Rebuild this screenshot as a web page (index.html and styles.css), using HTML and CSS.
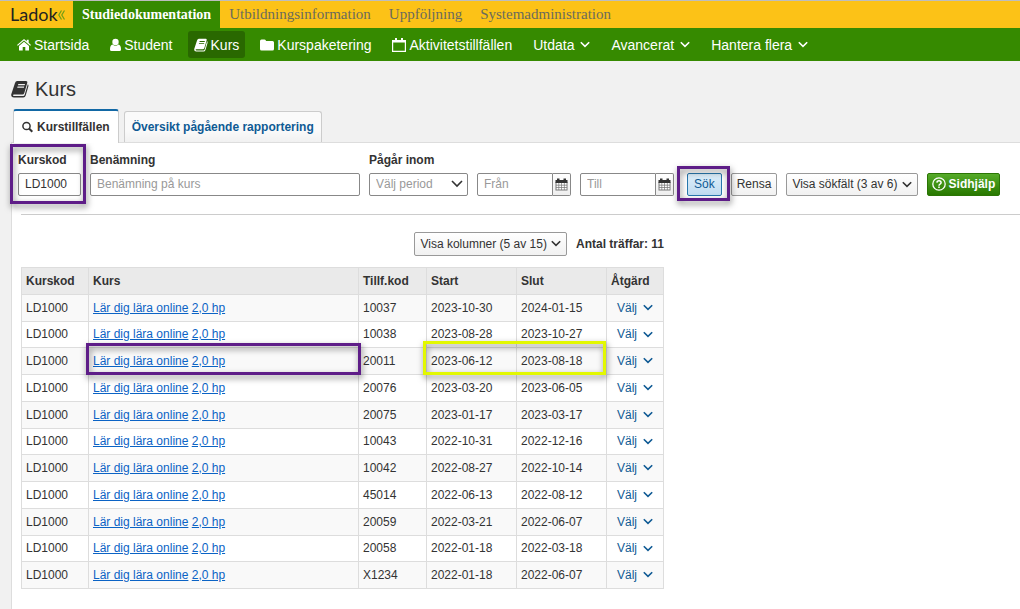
FILE: index.html
```html
<!DOCTYPE html>
<html lang="sv">
<head>
<meta charset="utf-8">
<meta name="viewport" content="width=device-width, initial-scale=1">
<title>Ladok – Kurs</title>
<link rel="stylesheet" href="styles.css">
</head>
<body>
<svg class="sprite" aria-hidden="true">
  <symbol id="chevron" viewBox="0 0 10 7"><path d="M.8 1.200 5 5.300 9.200 1.200" fill="none" stroke="currentColor" stroke-width="1.600"/></symbol>
  <symbol id="book" viewBox="0 0 18 18"><path fill="currentColor" fill-rule="evenodd" d="M6.2 1H15q1.800 0 1.300 1.800L13.300 13q-.5 1.500-2 1.500H2.900q-1 0-.8.9.2.6 1.200.6h9q1 0 1.300-1L16.800 4.300q1 .6.600 2L14.700 15.500Q14.200 17.500 12.200 17.500H3Q0 17.500.2 14.500L4 3Q4.600 1 6.200 1ZM7.300 4 7 5.200h6.700L14 4ZM6.500 6.600 6.200 7.800h6.700l.3-1.200Z"/></symbol>
  <symbol id="calendar" viewBox="0 0 13 13"><path fill="#777" d="M.5 4h12v8.500H.5Z"/><path fill="currentColor" d="M.5 2H2V.5h2.500V2h4V.5H11V2h1.500v3H.5Z"/><path fill="#fff" d="M1.500 5h2v1.700h-2zM4.200 5h2v1.700h-2zM6.900 5h2v1.700h-2zM9.600 5h2v1.700h-2zM1.500 7.400h2v1.700h-2zM4.200 7.400h2v1.700h-2zM6.900 7.400h2v1.700h-2zM9.600 7.400h2v1.700h-2zM1.500 9.800h2v1.700h-2zM4.200 9.800h2v1.700h-2zM6.900 9.800h2v1.700h-2zM9.600 9.800h2v1.700h-2z"/></symbol>
</svg>

<header>
  <nav class="topbar" aria-label="Moduler">
    <a class="logo" href="#"><span>Ladok</span><svg viewBox="0 0 7 12"><path d="M3.500 1.500.8 6l2.700 4.500M6.500 1.500 3.800 6l2.700 4.500" fill="none" stroke="#6f9d16" stroke-width="1.200"/></svg></a>
    <a class="module module-active" href="#">Studiedokumentation</a>
    <a class="module" href="#">Utbildningsinformation</a>
    <a class="module" href="#">Uppföljning</a>
    <a class="module" href="#">Systemadministration</a>
  </nav>
  <nav class="menu" aria-label="Huvudmeny">
    <a class="menu-item" href="#"><svg class="icon-14" viewBox="0 0 14 14"><path fill="currentColor" d="M7 3.800 12 8v4.500H8.300V9H5.700v3.500H2V8ZM7 1l2.800 2.300V1.800h1.900v3L14 6.900l-.8.900L7 2.600.8 7.800 0 6.900Z"/></svg>Startsida</a>
    <a class="menu-item" href="#"><svg class="icon-11" viewBox="0 0 11 14"><circle cx="5.500" cy="4" r="3.200" fill="currentColor"/><path fill="currentColor" d="M2.600 6.500Q5.500 9 8.400 6.500 11 7 11 11.500q0 1.500-1.500 1.500h-8Q0 13 0 11.500 0 7 2.600 6.500Z"/></svg>Student</a>
    <a class="menu-item menu-item-active" href="#"><svg class="icon-14"><use href="#book"/></svg>Kurs</a>
    <a class="menu-item" href="#"><svg class="icon-14" viewBox="0 0 14 14"><path fill="currentColor" d="M0 3Q0 1.500 1.500 1.500h3Q6 1.500 6 3h6.500Q14 3 14 4.500v6.500q0 1.500-1.500 1.500h-11Q0 12.500 0 11Z"/></svg>Kurspaketering</a>
    <a class="menu-item" href="#"><svg class="icon-14" viewBox="0 0 14 14"><path d="M.6 2.500h12.800v10.900H.6Z" fill="none" stroke="currentColor" stroke-width="1.200"/><path d="M.6 2.500h12.800v2H.6ZM3 0h2v4H3zM9 0h2v4H9z" fill="currentColor"/></svg>Aktivitetstillfällen</a>
    <a class="menu-item" href="#">Utdata<svg class="chevron"><use href="#chevron"/></svg></a>
    <a class="menu-item" href="#">Avancerat<svg class="chevron"><use href="#chevron"/></svg></a>
    <a class="menu-item" href="#">Hantera flera<svg class="chevron"><use href="#chevron"/></svg></a>
  </nav>
</header>

<main>
  <h1><svg class="icon-18"><use href="#book"/></svg>Kurs</h1>
  <div class="tabs">
    <a class="tab tab-active" href="#"><svg class="icon-11" viewBox="0 0 11 11"><circle cx="4.500" cy="4.500" r="3.600" fill="none" stroke="currentColor" stroke-width="1.500"/><path d="m7 7 3.300 3.300" stroke="currentColor" stroke-width="2"/></svg>Kurstillfällen</a>
    <a class="tab" href="#">Översikt pågående rapportering</a>
  </div>

  <div class="panel">
    <form class="search">
      <div class="field field-code">
        <label for="code">Kurskod</label>
        <input class="control" id="code" type="text" value="LD1000">
        <span class="mark mark-code"></span>
      </div>
      <div class="field field-name">
        <label for="name">Benämning</label>
        <input class="control" id="name" type="text" placeholder="Benämning på kurs">
      </div>
      <div class="field">
        <label for="period">Pågår inom</label>
        <div class="dates">
          <div class="select"><select class="control" id="period"><option>Välj period</option></select><svg class="select-arrow" viewBox="0 0 12 8"><path d="m1 1 5 5 5-5" fill="none" stroke="currentColor" stroke-width="1.600"/></svg></div>
          <div class="date"><input class="control" type="text" placeholder="Från" aria-label="Från"><button class="date-button" type="button" aria-label="Öppna kalender"><svg class="icon-13"><use href="#calendar"/></svg></button></div>
          <div class="date"><input class="control" type="text" placeholder="Till" aria-label="Till"><button class="date-button" type="button" aria-label="Öppna kalender"><svg class="icon-13"><use href="#calendar"/></svg></button></div>
        </div>
      </div>
      <div class="actions">
        <div class="marked"><button class="button button-search" type="button">Sök</button><span class="mark mark-search"></span></div>
        <button class="button" type="button">Rensa</button>
        <button class="button" type="button">Visa sökfält (3 av 6)<svg class="chevron"><use href="#chevron"/></svg></button>
        <button class="button button-help" type="button"><svg class="icon-14" viewBox="0 0 14 14"><circle cx="7" cy="7" r="6.200" fill="none" stroke="currentColor" stroke-width="1.300"/><path d="M4.900 5.600Q5 3.700 7 3.700T9.100 5.500Q9.100 6.500 8 7.100 7 7.600 7 8.700M7 9.500V11" fill="none" stroke="currentColor" stroke-width="1.500"/></svg>Sidhjälp</button>
      </div>
    </form>
    <hr>

    <section class="results">
      <div class="toolbar">
        <button class="button button-columns" type="button">Visa kolumner (5 av 15)<svg class="chevron"><use href="#chevron"/></svg></button>
        <strong>Antal träffar: 11</strong>
      </div>
      <table>
        <colgroup><col class="col-code"><col class="col-course"><col class="col-instance"><col class="col-date"><col class="col-date"><col class="col-action"></colgroup>
        <thead><tr><th>Kurskod</th><th>Kurs</th><th>Tillf.kod</th><th>Start</th><th>Slut</th><th>Åtgärd</th></tr></thead>
        <tbody>
          <tr><td>LD1000</td><td><a href="#">Lär dig lära online</a> <a href="#">2,0 hp</a></td><td>10037</td><td>2023-10-30</td><td>2024-01-15</td><td><button class="choose" type="button">Välj<svg class="chevron"><use href="#chevron"/></svg></button></td></tr>
          <tr><td>LD1000</td><td><a href="#">Lär dig lära online</a> <a href="#">2,0 hp</a></td><td>10038</td><td>2023-08-28</td><td>2023-10-27</td><td><button class="choose" type="button">Välj<svg class="chevron"><use href="#chevron"/></svg></button></td></tr>
          <tr><td>LD1000</td><td class="marked"><a href="#">Lär dig lära online</a> <a href="#">2,0 hp</a><span class="mark mark-course"></span></td><td>20011</td><td class="marked">2023-06-12<span class="mark mark-period"></span></td><td>2023-08-18</td><td><button class="choose" type="button">Välj<svg class="chevron"><use href="#chevron"/></svg></button></td></tr>
          <tr><td>LD1000</td><td><a href="#">Lär dig lära online</a> <a href="#">2,0 hp</a></td><td>20076</td><td>2023-03-20</td><td>2023-06-05</td><td><button class="choose" type="button">Välj<svg class="chevron"><use href="#chevron"/></svg></button></td></tr>
          <tr><td>LD1000</td><td><a href="#">Lär dig lära online</a> <a href="#">2,0 hp</a></td><td>20075</td><td>2023-01-17</td><td>2023-03-17</td><td><button class="choose" type="button">Välj<svg class="chevron"><use href="#chevron"/></svg></button></td></tr>
          <tr><td>LD1000</td><td><a href="#">Lär dig lära online</a> <a href="#">2,0 hp</a></td><td>10043</td><td>2022-10-31</td><td>2022-12-16</td><td><button class="choose" type="button">Välj<svg class="chevron"><use href="#chevron"/></svg></button></td></tr>
          <tr><td>LD1000</td><td><a href="#">Lär dig lära online</a> <a href="#">2,0 hp</a></td><td>10042</td><td>2022-08-27</td><td>2022-10-14</td><td><button class="choose" type="button">Välj<svg class="chevron"><use href="#chevron"/></svg></button></td></tr>
          <tr><td>LD1000</td><td><a href="#">Lär dig lära online</a> <a href="#">2,0 hp</a></td><td>45014</td><td>2022-06-13</td><td>2022-08-12</td><td><button class="choose" type="button">Välj<svg class="chevron"><use href="#chevron"/></svg></button></td></tr>
          <tr><td>LD1000</td><td><a href="#">Lär dig lära online</a> <a href="#">2,0 hp</a></td><td>20059</td><td>2022-03-21</td><td>2022-06-07</td><td><button class="choose" type="button">Välj<svg class="chevron"><use href="#chevron"/></svg></button></td></tr>
          <tr><td>LD1000</td><td><a href="#">Lär dig lära online</a> <a href="#">2,0 hp</a></td><td>20058</td><td>2022-01-18</td><td>2022-03-18</td><td><button class="choose" type="button">Välj<svg class="chevron"><use href="#chevron"/></svg></button></td></tr>
          <tr><td>LD1000</td><td><a href="#">Lär dig lära online</a> <a href="#">2,0 hp</a></td><td>X1234</td><td>2022-01-18</td><td>2022-06-07</td><td><button class="choose" type="button">Välj<svg class="chevron"><use href="#chevron"/></svg></button></td></tr>
        </tbody>
      </table>
    </section>
  </div>
</main>
</body>
</html>
```

FILE: styles.css
```css
* { box-sizing: border-box; }

body {
  margin: 0;
  min-height: 100vh;
  display: flex;
  flex-direction: column;
  background: #f1f1f1;
  color: #333;
  font: 12px/16px "Liberation Sans", Arial, sans-serif;
}

button, input, select { font: inherit; color: inherit; margin: 0; }
svg { flex: none; }
.sprite { position: absolute; width: 0; height: 0; }
.icon-11 { width: 11px; height: 14px; }
.icon-13 { width: 13px; height: 13px; }
.icon-14 { width: 14px; height: 14px; }
.icon-18 { width: 18px; height: 18px; }
.chevron { width: 10px; height: 7px; }

/* Header */
.topbar {
  display: flex;
  height: 28px;
  border-top: 1px solid #bdbdbd;
  background: #fcc217;
  font: 15px/27px "Liberation Serif", serif;
}
.logo {
  display: flex;
  align-items: center;
  width: 73px;
  padding-left: 10px;
  color: #222;
  font: 400 18px/27px Lato, sans-serif;
  text-decoration: none;
}
.logo svg { width: 7px; height: 12px; }
.module { padding: 0 9px; color: #6b6b5c; text-decoration: none; }
.module-active { padding: 0 9px; background: #368a00; color: #fff; font-size: 14px; font-weight: bold; }

.menu {
  display: flex;
  align-items: center;
  gap: 9px;
  min-height: 33px;
  padding-left: 11px;
  background: #368a00;
  font-size: 14px;
}
.menu-item {
  display: flex;
  align-items: center;
  gap: 3px;
  height: 27px;
  padding: 0 6px;
  border-radius: 3px;
  color: #fff;
  text-decoration: none;
}
.menu-item .chevron { margin-left: 3px; }
.menu-item-active { background: #296800; }

/* Heading and tabs */
main { flex: 1; display: flex; flex-direction: column; }
h1 {
  display: flex;
  align-items: center;
  gap: 6px;
  margin: 16px 0 8px 11px;
  font-size: 20px;
  font-weight: normal;
  line-height: 24px;
}
.tabs { display: flex; align-items: flex-end; gap: 5px; padding-left: 13px; }
.tab {
  display: flex;
  align-items: center;
  gap: 4px;
  height: 31px;
  padding: 0 7px;
  border: 1px solid #ccc;
  border-bottom: 0;
  border-radius: 3px 3px 0 0;
  background: linear-gradient(#fafafa 60%, #f1f1f1);
  color: #0f5a94;
  font-weight: bold;
  text-decoration: none;
}
.tab-active {
  height: 34px;
  padding: 0 8px;
  margin-bottom: -1px;
  border-top: 2px solid #1268a5;
  background: #fff;
  color: #333;
  z-index: 1;
}

/* Search form */
.panel {
  flex: 1;
  margin-left: 11px;
  border: 1px solid #ddd;
  border-width: 1px 0 0 1px;
  background: #fff;
}
.search {
  display: flex;
  flex-wrap: wrap;
  align-items: flex-end;
  gap: 9px;
  padding: 9px 6px 0;
}
.field { display: flex; flex-direction: column; gap: 5px; position: relative; }
.field label { font-weight: bold; }
.field-code { width: 63px; }
.field-name { width: 270px; }
.control {
  width: 100%;
  height: 23px;
  padding: 0 6px 1px;
  border: 1px solid #888;
  border-radius: 2px;
  background: #fff;
}
.control::placeholder { color: #999; opacity: 1; }
.dates, .actions { display: flex; gap: 9px; }
.actions { margin-left: 4px; }
.select { position: relative; width: 99px; }
.select select { appearance: none; color: #999; }
.select-arrow {
  position: absolute;
  top: 7px;
  right: 5px;
  width: 12px;
  height: 8px;
  pointer-events: none;
}
.date { display: flex; width: 94px; }
.date .control { flex: 1; min-width: 0; border-radius: 2px 0 0 2px; }
.date-button {
  display: flex;
  align-items: center;
  justify-content: center;
  width: 18px;
  height: 23px;
  padding: 0;
  border: 1px solid #888;
  border-left: 0;
  border-radius: 0 2px 2px 0;
  background: linear-gradient(#fff, #eee);
}
.button {
  display: flex;
  align-items: center;
  gap: 4px;
  height: 23px;
  padding: 0 5px 1px;
  border: 1px solid #999;
  border-radius: 2px;
  background: linear-gradient(#fff, #f1f1f1);
  white-space: nowrap;
}
.button-search { padding: 0 6px 1px; border-color: #2878ae; background: linear-gradient(#dceefa, #c0dcf0); color: #0f5a94; }
.button-help {
  gap: 3px;
  padding: 0 4px 1px;
  border-color: #2b7505;
  background: linear-gradient(#55ab28, #287800);
  color: #fff;
  font-weight: bold;
}
hr { height: 1px; margin: 18px 0 0 9px; border: 0; background: #ccc; }

/* Results */
.results { width: max-content; margin: 17px 0 20px 9px; }
.toolbar { display: flex; align-items: center; justify-content: flex-end; gap: 9px; margin-bottom: 11px; }
.button-columns { height: 24px; }
table { border-collapse: collapse; table-layout: fixed; width: 643px; }
.col-code { width: 67px; }
.col-course { width: 270px; }
.col-instance { width: 68px; }
.col-date { width: 90px; }
.col-action { width: 57px; }
th, td { height: 27px; padding: 0 4px; border: 1px solid #ddd; text-align: left; white-space: nowrap; }
td { padding-bottom: 1px; }
th { background: #eaeaea; }
tbody tr:nth-child(odd) { background: #f9f9f9; }
tbody tr:nth-child(4n + 2) td { height: 26px; }
td a { color: #0b63c5; }
.choose {
  display: flex;
  align-items: center;
  gap: 6px;
  padding: 0 6px;
  border: 0;
  background: none;
  color: #0f5a94;
}

/* Highlight frames */
.marked { position: relative; }
.mark {
  position: absolute;
  border: 3px solid #5e1d88;
  filter: drop-shadow(1px 3px 3px rgba(0, 0, 0, 0.5));
  pointer-events: none;
}
.mark-code { inset: -8px -5px -8px -8px; }
.mark-search { inset: -7px -8px -5px -10px; }
.mark-course { inset: -5px -3px -1px -3px; }
.mark-period { inset: -7px -90px -1px -4px; border-color: #e2f800; }
```
